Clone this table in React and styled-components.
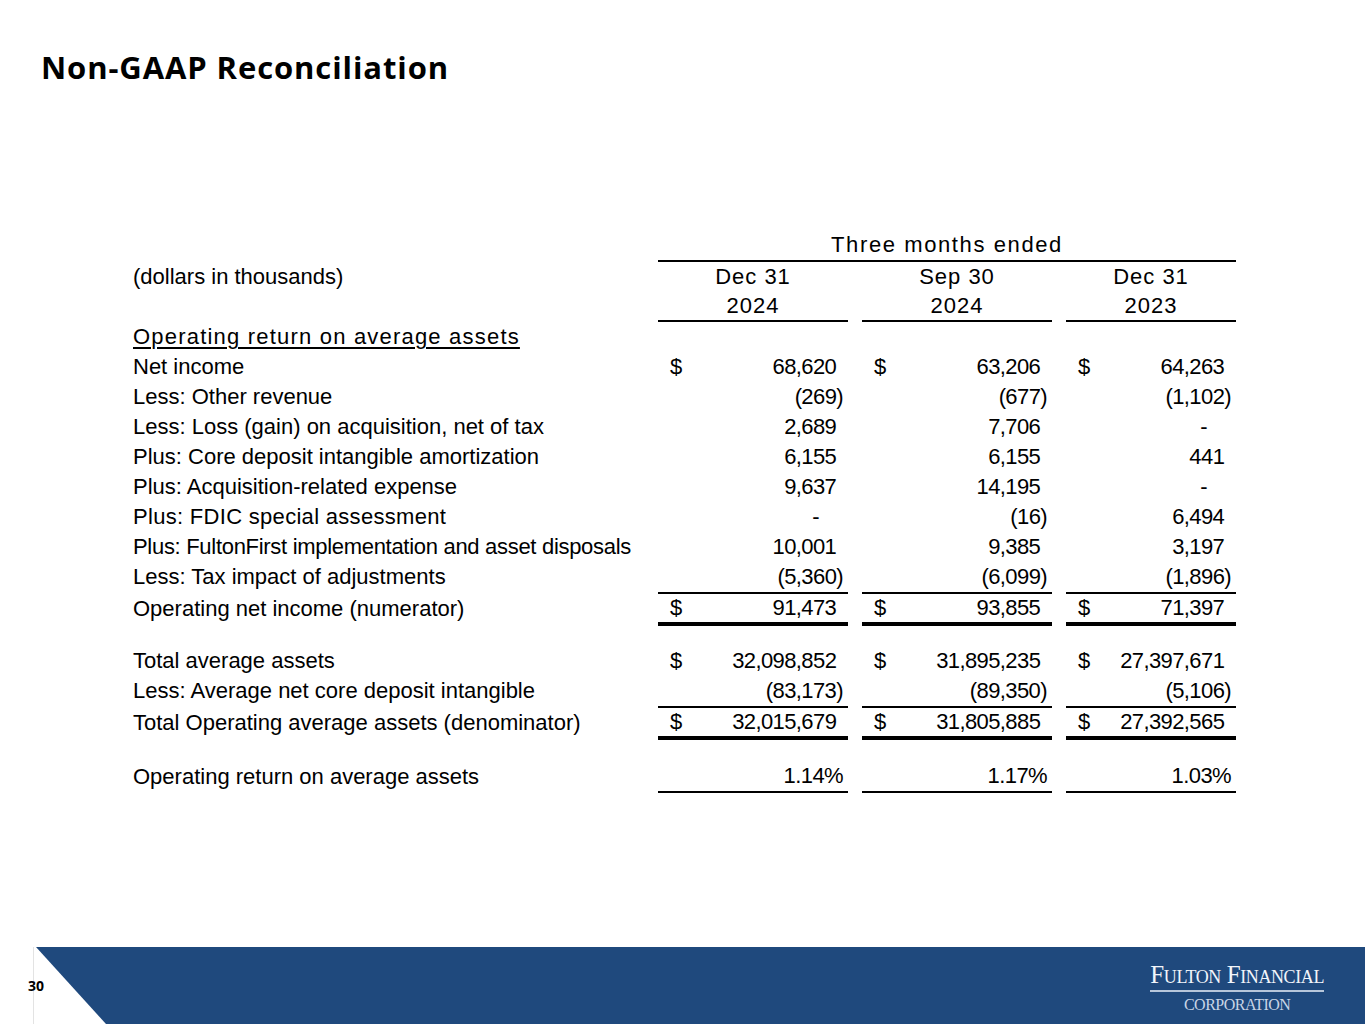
import React from 'react';
import styled, { createGlobalStyle } from 'styled-components';

const GlobalStyle = createGlobalStyle`
  body {
    margin: 0;
    background: #ffffff;
  }
`;

const Page = styled.div`
  width: 1365px;
  height: 1024px;
  display: flex;
  flex-direction: column;
  overflow: hidden;
  background: #fff;
`;

const Title = styled.h1`
  margin: 0;
  padding: 49px 0 0 41px;
  font-family: "Open Sans", "Liberation Sans", sans-serif;
  font-weight: 700;
  font-size: 31px;
  line-height: 36px;
  color: #000;
  letter-spacing: 0.9px;
`;

const Table = styled.div`
  margin: 145px 0 0 133px;
  display: flex;
  flex-direction: column;
  font-family: "Liberation Sans", Arial, sans-serif;
  font-size: 22px;
  color: #000;
  flex: 1;
`;

const Row = styled.div`
  display: grid;
  grid-template-columns: 511px 190px 190px 170px;
  column-gap: 14px;
  height: ${p => p.$h || 30}px;
`;

const Spacer = styled.div`
  height: ${p => p.$h}px;
`;

const Label = styled.div`
  display: flex;
  align-items: center;
  white-space: nowrap;
  letter-spacing: ${p => p.$ls || 0}px;
  text-decoration: ${p => (p.$u ? 'underline' : 'none')};
  text-underline-offset: 3px;
  text-decoration-thickness: 1.5px;
`;

const Head = styled.div`
  grid-column: ${p => p.$span || 'auto'};
  display: flex;
  align-items: center;
  justify-content: center;
  letter-spacing: ${p => p.$ls || 1}px;
  border-bottom: ${p => (p.$line ? '2px solid #000' : 'none')};
  box-sizing: border-box;
`;

const borders = { thin: '2px solid #000', thick: '4px solid #000' };

const Cell = styled.div`
  display: flex;
  align-items: center;
  justify-content: space-between;
  box-sizing: border-box;
  padding: 0 5px 0 12px;
  border-top: ${p => borders[p.$top] || 'none'};
  border-bottom: ${p => borders[p.$bottom] || 'none'};
  letter-spacing: -0.6px;
  white-space: nowrap;
`;

const Pad = styled.span`
  visibility: hidden;
`;

const Dash = styled.span`
  margin-right: 24px;
`;

const Value = ({ v, dollar, pct, top, bottom }) => {
  let body;
  if (pct) body = <span>{v}</span>;
  else if (v === '-') body = <Dash>-</Dash>;
  else if (v.startsWith('(')) body = <span>{v}</span>;
  else body = <span>{v}<Pad>)</Pad></span>;
  return (
    <Cell $top={top} $bottom={bottom}>
      <span>{dollar ? '$' : ''}</span>
      {body}
    </Cell>
  );
};

const DataRow = ({ label, vals, dollar, pct, top, bottom, h, ls }) => (
  <Row $h={h}>
    <Label $ls={ls}>{label}</Label>
    {vals.map((v, i) => (
      <Value key={i} v={v} dollar={dollar} pct={pct} top={top} bottom={bottom} />
    ))}
  </Row>
);

const Footer = styled.div`
  position: relative;
  height: 77px;
  border-left: 1px solid #e3e3e3;
  margin-left: 33px;
`;

const Band = styled.div`
  height: 100%;
  background: #1f497d;
  clip-path: polygon(2px 0, 100% 0, 100% 100%, 72px 100%);
  display: flex;
  justify-content: flex-end;
  align-items: center;
  padding-right: 41px;
`;

const PageNum = styled.span`
  position: absolute;
  left: -6px;
  top: 29px;
  font-family: "Open Sans", "Liberation Sans", sans-serif;
  font-weight: 700;
  font-size: 14px;
  color: #000;
`;

const Logo = styled.div`
  display: flex;
  flex-direction: column;
  align-items: center;
  font-family: "Liberation Serif", "Times New Roman", serif;
  margin-top: 6px;
`;

const LogoName = styled.div`
  font-size: 25px;
  font-variant: small-caps;
  color: #f2f5fa;
  letter-spacing: -0.4px;
  line-height: 24px;
  padding-bottom: 3px;
  border-bottom: 2px solid #b7c6da;
`;

const LogoSub = styled.div`
  font-size: 16px;
  color: #c9d5e6;
  letter-spacing: -0.5px;
  line-height: 20px;
  margin-top: 3px;
`;

const App = () => (
  <Page>
    <GlobalStyle />
    <Title>Non-GAAP Reconciliation</Title>
    <Table>
      <Row $h={32}>
        <div />
        <Head $span="2 / 5" $line $ls={1.6}>Three months ended</Head>
      </Row>
      <Row>
        <Label>(dollars in thousands)</Label>
        <Head>Dec 31</Head>
        <Head>Sep 30</Head>
        <Head>Dec 31</Head>
      </Row>
      <Row>
        <div />
        <Head $line>2024</Head>
        <Head $line>2024</Head>
        <Head $line>2023</Head>
      </Row>
      <Row>
        <Label $u $ls={1.2}>Operating return on average assets</Label>
      </Row>
      <DataRow label="Net income" vals={['68,620', '63,206', '64,263']} dollar />
      <DataRow label="Less: Other revenue" vals={['(269)', '(677)', '(1,102)']} />
      <DataRow label="Less: Loss (gain) on acquisition, net of tax" vals={['2,689', '7,706', '-']} />
      <DataRow label="Plus: Core deposit intangible amortization" vals={['6,155', '6,155', '441']} />
      <DataRow label="Plus: Acquisition-related expense" vals={['9,637', '14,195', '-']} />
      <DataRow label="Plus: FDIC special assessment" vals={['-', '(16)', '6,494']} ls={0.3} />
      <DataRow label="Plus: FultonFirst implementation and asset disposals" vals={['10,001', '9,385', '3,197']} ls={-0.3} />
      <DataRow label="Less: Tax impact of adjustments" vals={['(5,360)', '(6,099)', '(1,896)']} />
      <DataRow label="Operating net income (numerator)" vals={['91,473', '93,855', '71,397']} dollar top="thin" bottom="thick" h={34} />
      <Spacer $h={20} />
      <DataRow label="Total average assets" vals={['32,098,852', '31,895,235', '27,397,671']} dollar />
      <DataRow label="Less: Average net core deposit intangible" vals={['(83,173)', '(89,350)', '(5,106)']} />
      <DataRow label="Total Operating average assets (denominator)" vals={['32,015,679', '31,805,885', '27,392,565']} dollar top="thin" bottom="thick" h={34} />
      <Spacer $h={21} />
      <DataRow label="Operating return on average assets" vals={['1.14%', '1.17%', '1.03%']} pct bottom="thin" h={32} />
    </Table>
    <Footer>
      <Band>
        <Logo>
          <LogoName>Fulton Financial</LogoName>
          <LogoSub>CORPORATION</LogoSub>
        </Logo>
      </Band>
      <PageNum>30</PageNum>
    </Footer>
  </Page>
);

export default App;
